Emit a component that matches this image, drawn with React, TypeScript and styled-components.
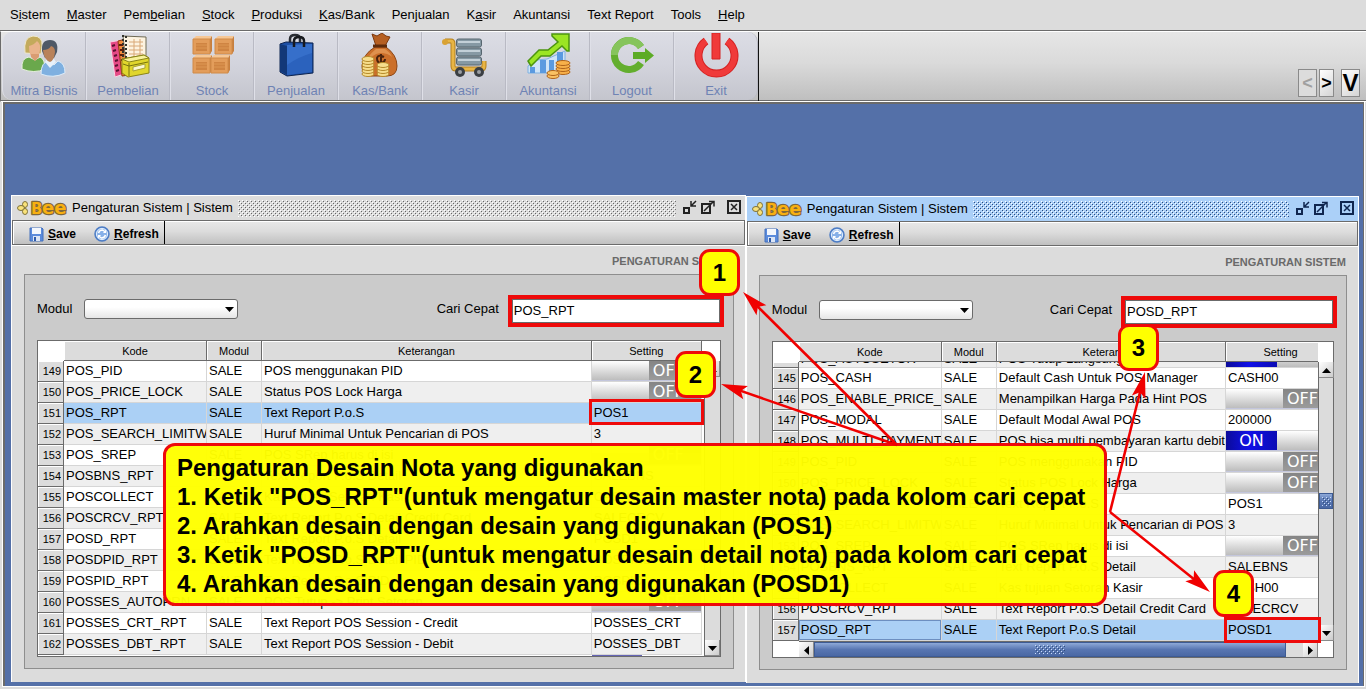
import React from "react";
import styled, { createGlobalStyle, css } from "styled-components";

const GlobalStyle = createGlobalStyle`
  * { box-sizing: border-box; }
  body {
    margin: 0;
    background: #dcdcdc;
    color: #000;
    font: 13px/16px "Liberation Sans", Arial, sans-serif;
  }
  button, input, select { font: inherit; color: inherit; }
  button { border: 0; padding: 0; background: none; }
`;

const LINE = "#6b6b6b";
const RED = "#ee0a0a";
const bar = "linear-gradient(#e8e8e8, #dcdcdc 45%, #c0c0c0)";

/* ---------- page shell ---------- */

const Page = styled.div`
  position: relative;
  overflow: hidden;
`;

const MenuBar = styled.nav`
  display: flex;
  align-items: center;
  gap: 17px;
  height: 31px;
  padding-left: 10px;
  border-bottom: 1px solid ${LINE};
`;

const MenuItem = styled.button`
  white-space: nowrap;
`;

const Ribbon = styled.div`
  display: flex;
  height: 71px;
  border-top: 1px solid #fff;
  border-bottom: 1px solid #fff;
  border-left: 1px solid ${LINE};
  background: linear-gradient(#e6e6e6, #dadada 45%, #bebebe);
  box-shadow: inset 0 -1px ${LINE};
`;

const RibbonGroup = styled.div`
  display: flex;
  padding: 0 0 1px 1px;
  border-right: 1px solid #111;
`;

const RibbonButton = styled.button`
  display: flex;
  flex-direction: column;
  align-items: center;
  gap: 4px;
  width: 84px;
  padding-top: 1px;
  color: #6f83b4;
  white-space: nowrap;
  background: linear-gradient(#dcdde5, #d2d3dc 50%, #c4c5cd);
  border-right: 1px solid #b9bac4;
  border-left: 1px solid #dfe0e8;
  &:first-child { border-radius: 10px 0 0 10px; }
  &:last-child { border-radius: 0 10px 10px 0; }
`;

const Pager = styled.div`
  display: flex;
  align-items: flex-end;
  gap: 2px;
  margin-left: auto;
  padding: 0 6px 4px 0;
`;

const PagerButton = styled.button<{ $w: number; $gap?: number; $size: number }>`
  width: ${(p) => p.$w}px;
  height: 28px;
  margin-left: ${(p) => p.$gap ?? 0}px;
  border: 1px solid #8a8a8a;
  background: linear-gradient(135deg, #fff, #d4d4d4);
  font-weight: bold;
  font-size: ${(p) => p.$size}px;
  &:disabled { color: #a0a0a0; background: #dcdcdc; }
`;

const Desktop = styled.main`
  display: flex;
  align-items: flex-start;
  padding: 91px 4px 3px 6px;
  border: solid ${LINE};
  border-width: 2px 1px 0 2px;
  outline: 1px solid #fff;
  margin: 0 2px 3px 3px;
  background: #5470a8;
`;

/* ---------- internal window ---------- */

const Frame = styled.section<{ $grow: number; $drop: number }>`
  flex: ${(p) => p.$grow} 1 0;
  min-width: 0;
  margin-top: ${(p) => p.$drop}px;
  padding-bottom: 13px;
  border-top: 1px solid #fff;
  border-left: 1px solid #fff;
  border-right: 1px solid #fff;
  background: #dcdcdc;
`;

const TitleBar = styled.header<{ $active: boolean }>`
  display: flex;
  align-items: center;
  gap: 5px;
  height: 24px;
  padding: 0 4px 0 5px;
  white-space: nowrap;
  background: ${(p) => (p.$active ? "#abd0f8" : "#dcdcdc")};
`;

const Title = styled.h1`
  margin: 0;
  font-size: 13px;
  font-weight: normal;
`;

const Bumps = styled.svg`
  flex: 1;
  min-width: 0;
  height: 17px;
`;

const ToolBar = styled.div`
  display: flex;
  height: 25px;
  border: 1px solid ${LINE};
  background: ${bar};
  box-shadow: 0 1px #fff, inset 1px 1px #fff;
`;

const Tools = styled.div`
  display: flex;
  align-items: center;
  gap: 18px;
  padding: 3px 5px 0 16px;
  border-right: 1px solid #000;
`;

const ToolButton = styled.button`
  display: flex;
  align-items: center;
  gap: 4px;
  font-size: 12px;
  font-weight: bold;
`;

const Caption = styled.h2`
  margin: 0;
  padding: 8px 12px 5px;
  text-align: right;
  font-size: 11px;
  line-height: 16px;
  color: #6a6a6a;
`;

const Group = styled.div`
  margin: 0 11px 0 12px;
  padding-bottom: 11px;
  border: 1px solid #8e8e8e;
  background: #cbcbcb;
`;

const FieldRow = styled.div`
  display: flex;
  align-items: center;
  justify-content: space-between;
  padding: 20px 9px 13px 12px;
`;

const Field = styled.div<{ $gap: number }>`
  display: flex;
  align-items: center;
  gap: ${(p) => p.$gap}px;
`;

const FieldLabel = styled.label`
  padding-bottom: 4px;
  white-space: nowrap;
`;

const SelectBox = styled.div`
  position: relative;
  height: 24px;
  svg { position: absolute; right: 4px; top: 6px; pointer-events: none; }
`;

const Select = styled.select`
  appearance: none;
  display: block;
  width: 154px;
  height: 20px;
  border: 1px solid ${LINE};
  border-radius: 3px;
  background: linear-gradient(#fff 40%, #e6e6e6);
`;

const Marked = styled.div`
  width: 216px;
  border: 4px solid ${RED};
`;

const TextInput = styled.input`
  display: block;
  width: 100%;
  height: 24px;
  padding: 0 1px 2px;
  border: 1px solid ${LINE};
  border-radius: 0;
  background: #fff;
`;

/* ---------- data grid ---------- */

const GridBox = styled.div<{ $bar: number }>`
  display: grid;
  grid-template-columns: minmax(0, 1fr) ${(p) => p.$bar}px;
  margin: 0 12px;
  height: 317px;
  border: 1px solid ${LINE};
  background: #fff;
`;

const GridMain = styled.div`
  display: flex;
  flex-direction: column;
  overflow: hidden;
`;

const Table = styled.table<{ $extra: number }>`
  width: calc(100% + ${(p) => p.$extra}px);
  flex: none;
  table-layout: fixed;
  border-collapse: separate;
  border-spacing: 0;
  col:nth-child(1) { width: 26px; }
  col:nth-child(2) { width: 143px; }
  col:nth-child(3) { width: 55px; }
  col:nth-child(5) { width: 110px; }
`;

const HeadCell = styled.th`
  height: 20px;
  padding: 0;
  font-size: 11px;
  line-height: 16px;
  font-weight: normal;
  background: #dcdcdc;
  border-right: 1px solid ${LINE};
  border-bottom: 1px solid ${LINE};
  box-shadow: inset 1px 1px #fff;
  &:first-child { background: #fff; border: 0; }
`;

const clip = css<{ $h?: number }>`
  display: flex;
  align-items: ${(p) => (p.$h ? "flex-end" : "center")};
  height: ${(p) => p.$h ?? 20}px;
  overflow: hidden;
  white-space: nowrap;
`;

const RowNumber = styled.th`
  padding: 0 2px 0 0;
  font-size: 11px;
  font-weight: normal;
  background: #dcdcdc;
  border-right: 1px solid ${LINE};
  border-bottom: 1px solid ${LINE};
  box-shadow: inset 1px 1px #fff;
`;

const NumberText = styled.div<{ $h?: number }>`
  ${clip}
  justify-content: flex-end;
`;

const Row = styled.tr<{ $tone: "even" | "odd" | "picked" }>`
  background: ${(p) => ({ even: "#fff", odd: "#efefef", picked: "#abd0f5" })[p.$tone]};
`;

const Cell = styled.td<{ $focus?: boolean }>`
  padding: 0;
  border-right: 1px solid #d6d6d6;
  border-bottom: 1px solid #d6d6d6;
  ${(p) => p.$focus && "box-shadow: inset 0 0 0 1px #6d8fc0;"}
`;

const CellText = styled.div<{ $h?: number }>`
  ${clip}
  padding-left: 2px;
`;

const ToggleBox = styled.button<{ $on: boolean; $h?: number }>`
  display: grid;
  grid-template-columns: ${(p) => (p.$on ? "51px 1fr" : "57px 1fr")};
  align-content: ${(p) => (p.$h ? "end" : "start")};
  width: 100%;
  height: ${(p) => p.$h ?? 20}px;
  overflow: hidden;
  border-bottom: ${(p) => (p.$h ? 0 : 1)}px solid #c3c6dc;
`;

const ToggleFace = styled.span<{ $kind: "on" | "off" | "knob" }>`
  height: 19px;
  padding-left: ${(p) => (p.$kind === "off" ? 4 : 0)}px;
  line-height: 19px;
  text-align: ${(p) => (p.$kind === "off" ? "left" : "center")};
  font-family: "DejaVu Sans", sans-serif;
  font-size: 16px;
  color: #fff;
  background: ${(p) =>
    ({
      on: "linear-gradient(90deg, #0b0b9a, #1010e8 45%, #0b0bb4)",
      off: "linear-gradient(#858585, #9b9b9b)",
      knob: "linear-gradient(#fff, #dadada 55%, #bdbdbd)",
    })[p.$kind]};
`;

const NextRow = styled.div`
  height: 1px;
  background: linear-gradient(90deg, #6464b4, #6464b4) no-repeat right 60px top / 50px 1px;
`;

const VBar = styled.div<{ $gap: number; $corner?: boolean }>`
  display: flex;
  flex-direction: column;
  margin: 20px 0 ${(p) => (p.$corner ? 16 : 0)}px ${(p) => p.$gap}px;
  background: #dcdcdc;
  border-left: 1px solid ${LINE};
`;

const HBar = styled.div`
  display: flex;
  height: 16px;
  margin-left: 26px;
  background: #dcdcdc;
  border-top: 1px solid ${LINE};
`;

const BarButton = styled.button`
  flex: none;
  display: flex;
  align-items: center;
  justify-content: center;
  width: 15px;
  height: 16px;
  background: linear-gradient(135deg, #fff, #c8c8c8);
  box-shadow: inset -1px -1px #8a8a8a;
`;

const Thumb = styled.div<{ $vertical?: boolean }>`
  display: flex;
  align-items: center;
  justify-content: center;
  border: 1px solid #3d5b94;
  background: linear-gradient(#8ea9d8, #5876b2 50%, #4a68a4);
  ${(p) => (p.$vertical ? "height: 16px;" : "flex: 1; margin-right: 17px;")}
`;

const Space = styled.div<{ $grow: number }>`
  flex: ${(p) => p.$grow} 1 0;
`;

/* ---------- tutorial notes laid over the windows ---------- */

const Notes = styled.div`
  position: absolute;
  inset: 0;
  pointer-events: none;
`;

const Arrows = styled.svg`
  position: absolute;
  left: 0;
  top: 0;
`;

const Callout = styled.div`
  position: absolute;
  left: 163px;
  top: 443px;
  width: 944px;
  padding: 7px 0 5px 11px;
  border: 3px solid ${RED};
  border-radius: 12px;
  background: rgba(255, 255, 0, 0.97);
  font-size: 24px;
  line-height: 29px;
  font-weight: bold;
  white-space: nowrap;
  p { margin: 0; }
`;

const Badge = styled.div<{ $x: number; $y: number }>`
  position: absolute;
  left: ${(p) => p.$x}px;
  top: ${(p) => p.$y}px;
  width: 41px;
  height: 47px;
  border: 3px solid ${RED};
  border-radius: 11px;
  background: #ff0;
  text-align: center;
  font-size: 24px;
  line-height: 41px;
  font-weight: bold;
`;

const CellMark = styled.div<{ $x: number; $y: number; $w: number }>`
  position: absolute;
  left: ${(p) => p.$x}px;
  top: ${(p) => p.$y}px;
  width: ${(p) => p.$w}px;
  height: 26px;
  border: 3px solid ${RED};
`;

/* ---------- drawings ---------- */

const Icon = ({ children }: { children: React.ReactNode }) => (
  <svg width="46" height="46" viewBox="0 0 46 46" fill="none">{children}</svg>
);

const People = () => (
  <Icon>
    <path d="M1 36q-1-11 7-12l6 3 5-3q5 2 5 12-11 5-23 0z" fill="#6aa84c" stroke="#e6f0df" />
    <path d="M4 20Q2 4 12 3q10 0 9 10l-1 8z" fill="#c3aa5c" stroke="#efe9cf" />
    <path d="M8 13q5-1 8-5 4 3 3 9-1 8-6 9-5-2-5-13z" fill="#e9b48c" />
    <path d="M10 24l4 4 4-4v-3h-8z" fill="#d99c72" />
    <path d="M20 41q0-12 8-13l5 4 4-4q7 2 7 12-12 6-24 1z" fill="#7fb0e0" stroke="#dcebf8" />
    <path d="M24 29l5 6 6-6-2-3h-7z" fill="#e8f1fa" />
    <path d="M21 18Q20 7 29 7q9 0 7 12l-3 6h-9z" fill="#4f5966" />
    <path d="M22 17q6 0 8-4 4 1 4 6-1 9-5 10-6-2-7-12z" fill="#b9825a" />
  </Icon>
);

const Ledger = () => (
  <Icon>
    <path d="M5 9l12-2 5 33-12 4z" fill="#e64a86" stroke="#f7d3e2" />
    <path d="M7 13l3-1M8 18l3-1M9 23l3-1M10 28l3-1M10 33l3-1M11 38l3-1" stroke="#5a1030" strokeWidth="2" />
    <path d="M13 8l8-2 3 36-7 1z" fill="#f08b3c" stroke="#8d3a10" />
    <path d="M14 12h4M15 17h4M15 22h4M16 27h4" stroke="#5c1c0a" strokeWidth="2" />
    <path d="M18 3l23 1v25l-20 1z" fill="#fdf3e0" stroke="#6f6a55" />
    <path d="M24 9h14M24 13h14M24 17h14M24 21h14M29 6v20M35 6v20" stroke="#d9a877" />
    <path d="M18 2v26M21 3v24" stroke="#33332c" strokeWidth="2" strokeDasharray="2 2" />
    <path d="M17 26l22-4 5 3v15l-21 4-6-4z" fill="#e0d62c" stroke="#8a8418" />
    <path d="M17 26l22-4 5 3-20 4z" fill="#f7f29a" stroke="#8a8418" />
    <path d="M18 31l6 2 19-4M24 30v13" stroke="#77720f" />
    <path d="M28 34l12-3v4l-12 3z" fill="#fbf8d2" stroke="#a9a233" />
  </Icon>
);

const Box = ({ x, y }: { x: number; y: number }) => (
  <g transform={`translate(${x} ${y})`}>
    <path d="M0 3l3-3h16l-2 3z" fill="#f6c795" />
    <path d="M17 3l2-3v15l-2 3z" fill="#c77f3e" />
    <path d="M0 3h17v15H0z" fill="#e39d5b" stroke="#d08a48" />
    <path d="M3 7h11v8H3z" fill="#cf8442" />
    <path d="M3 9h11M3 12h11" stroke="#dd9753" />
  </g>
);

const Boxes = () => (
  <Icon>
    <Box x={4} y={22} />
    <Box x={22} y={22} />
    <Box x={4} y={3} />
    <Box x={26} y={3} />
  </Icon>
);

const Bag = () => (
  <Icon>
    <path d="M17 14V6q0-4 5-4t5 4v8" stroke="#2a2d33" strokeWidth="2.500" />
    <path d="M7 11l6-2 27 1v30l-26 3-7-4z" fill="#1d4fa5" stroke="#0d2450" />
    <path d="M14 12l25-1v28l-25 3z" fill="#2b62bd" />
    <path d="M7 11l7 2v29l-7-4z" fill="#123878" />
    <path d="M14 12l25-1v9q-14 4-25 12z" fill="#3e78d2" opacity=".6" />
    <path d="M21 14V8q0-4 5-4t5 4v6" stroke="#17191d" strokeWidth="2.500" />
  </Icon>
);

const Coins = ({ x, y, n }: { x: number; y: number; n: number }) => (
  <g>
    {Array.from({ length: n }, (_, i) => (
      <ellipse key={i} cx={x} cy={y - i * 3} rx="6" ry="2.500" fill="#f6dd8c" stroke="#b58a2a" />
    ))}
  </g>
);

const Sack = () => (
  <Icon>
    <path d="M15 1l5 2 5-3 4 3 4 1-5 9h-9z" fill="#b65f22" stroke="#7c3a10" />
    <path d="M18 14h11q11 8 11 19 0 10-10 10H14Q5 43 5 33q1-12 13-19z" fill="#cb6f2a" stroke="#8c4515" />
    <path d="M19 16q-9 7-10 15 6-10 14-11 8 0 12 4-2-5-7-8z" fill="#e39a57" opacity=".8" />
    <path d="M16 13h14" stroke="#5e2b0c" strokeWidth="3" />
    <path d="M27 24q-6-3-7 1 0 5 4 5 4-1 4-4M24 21v12" stroke="#4a230c" strokeWidth="2" />
    <Coins x={11} y={41} n={6} />
    <Coins x={26} y={41} n={4} />
  </Icon>
);

const Cart = () => (
  <Icon>
    <path d="M4 8h6q2 0 2 3v22q0 3 3 3h25q3 0 3-3v-5" stroke="#b5811e" strokeWidth="5" />
    <path d="M4 8h6q2 0 2 3v22q0 3 3 3h25q3 0 3-3v-5" stroke="#e8b545" strokeWidth="3" />
    <circle cx="4" cy="9" r="3" fill="#d9a233" />
    {[6, 15, 24].map((y) => (
      <g key={y}>
        <rect x="15.500" y={y} width="25" height="8" rx="2" fill="#8699a4" stroke="#57666f" />
        <path d={`M17 ${y + 3}h22`} stroke="#c3d0d8" strokeWidth="2" />
      </g>
    ))}
    <circle cx="19" cy="39" r="5" fill="#3b3f44" />
    <circle cx="19" cy="39" r="2" fill="#9b9fa3" />
    <circle cx="38" cy="39" r="5" fill="#3b3f44" />
    <circle cx="38" cy="39" r="2" fill="#9b9fa3" />
  </Icon>
);

const Chart = () => (
  <Icon>
    <path d="M3 33l9-6 10-1 9-4 9-4v22H3z" fill="#cfe4f8" stroke="#7fb1e2" />
    <path d="M5 34h5v6H5zM15 27h6v13h-6zM24 27h5v13h-5zM32 19h6v21h-6z" fill="#5b9ae0" />
    <path d="M3 28l11-11h9l10-8-6-6v-2h17v17h-2l-5-5-12 10h-9L6 33z" fill="#9be524" stroke="#4c9410" strokeWidth="1.500" />
    {[39, 36, 33, 30].map((y) => (
      <ellipse key={y} cx="38" cy={y} rx="7" ry="2.500" fill="#f7b04a" stroke="#b0641a" />
    ))}
    {[43, 40].map((y) => (
      <ellipse key={y} cx="28" cy={y} rx="6" ry="2.500" fill="#f9c163" stroke="#b0641a" />
    ))}
  </Icon>
);

const Logout = () => (
  <Icon>
    <path d="M32 14A14.500 14.500 0 1 0 32 30" stroke="#63ae2e" strokeWidth="7" />
    <path d="M5.500 22A14.500 14.500 0 0 1 32 14" stroke="#86c45c" strokeWidth="7" />
    <path d="M24 19h12v-4l9 7.500-9 7.500v-4H24z" fill="#5cab26" />
  </Icon>
);

const Power = () => (
  <Icon>
    <path d="M13 8A18 18 0 1 0 34 8" stroke="#d42222" strokeWidth="8" />
    <path d="M13 8A18 18 0 1 0 34 8" stroke="#f03a3a" strokeWidth="6" />
    <path d="M19 0h8v26h-8z" fill="#f03a3a" stroke="#d42222" />
  </Icon>
);

const BeeLogo = () => (
  <svg width="50" height="16" viewBox="0 0 50 16">
    <g fill="#f9e27a" stroke="#7d7038">
      <ellipse cx="8" cy="4.500" rx="2.500" ry="3" />
      <ellipse cx="4" cy="8" rx="3.500" ry="2.500" />
      <ellipse cx="8" cy="11.500" rx="2.500" ry="3" />
    </g>
    <g fontFamily="DejaVu Sans, sans-serif" fontWeight="bold" fill="#f8b010" stroke="#80683a" strokeWidth="2.500" paintOrder="stroke" strokeLinejoin="round">
      <text x="14" y="14" fontSize="15">B</text>
      <text x="25" y="14" fontSize="18">ee</text>
    </g>
  </svg>
);

const WindowButtons = ({ ink }: { ink: string }) => (
  <svg width="60" height="17" viewBox="0 0 60 17" fill="none" stroke={ink} strokeWidth="2">
    <path d="M3 8h5v5H3z" />
    <path d="M15 1l-5 5M10 1v5h5" strokeWidth="1.500" />
    <path d="M21 4h8v9h-8z" />
    <path d="M23 11l9-9M28 1.500h5v5" strokeWidth="1.500" />
    <path d="M47 1h12v12H47z" />
    <path d="M50 4l6 6M56 4l-6 6" strokeWidth="1.500" />
  </svg>
);

const SaveIcon = () => (
  <svg width="15" height="15" viewBox="0 0 15 15">
    <path d="M1 1h12l1 1v12H1z" fill="#5b8bdc" stroke="#4470bc" />
    <path d="M3 1h9v6H3z" fill="#f3f7fd" />
    <path d="M4 9h7v5H4z" fill="#dbe5f5" />
    <path d="M5 10h2v4H5z" fill="#2f5aa8" />
  </svg>
);

const RefreshIcon = () => (
  <svg width="16" height="16" viewBox="0 0 16 16" fill="none">
    <circle cx="8" cy="8" r="7" fill="#86b0e8" stroke="#4d7cc4" strokeWidth="1.500" />
    <circle cx="8" cy="8" r="5.500" stroke="#e8f2fd" />
    <path d="M4.500 7q1-3 4-3l3 2M11.500 9q-1 3-4 3l-3-2" stroke="#fff" strokeWidth="1.500" />
    <path d="M12 3.500V7H9zM4 12.500V9h3z" fill="#fff" />
  </svg>
);

const Triangle = ({ turn = 0 }: { turn?: number }) => (
  <svg width="9" height="9" viewBox="0 0 9 9">
    <path d="M0 2h9L4.500 7z" transform={`rotate(${turn} 4.500 4.500)`} />
  </svg>
);

const Grip = ({ w, id }: { w: number; id: string }) => (
  <svg width={w} height="9">
    <pattern id={id} width="4" height="4" patternUnits="userSpaceOnUse">
      <path d="M0 0h1v1H0zM2 2h1v1H2z" fill="#c9dcfa" />
      <path d="M1 1h1v1H1zM3 3h1v1H3z" fill="#33507f" />
    </pattern>
    <rect width={w} height="9" fill={`url(#${id})`} />
  </svg>
);

/* ---------- content ---------- */

type Setting = string | boolean;
type Entry = [number | "", string, string, string, Setting];

const menu: [string, string, string][] = [
  ["S", "i", "stem"], ["", "M", "aster"], ["Pem", "b", "elian"], ["", "S", "tock"],
  ["", "P", "roduksi"], ["", "K", "as/Bank"], ["Penjualan", "", ""], ["K", "a", "sir"],
  ["Akuntansi", "", ""], ["Text Report", "", ""], ["Tools", "", ""], ["", "H", "elp"],
];

const ribbon: [string, () => React.JSX.Element][] = [
  ["Mitra Bisnis", People], ["Pembelian", Ledger], ["Stock", Boxes], ["Penjualan", Bag],
  ["Kas/Bank", Sack], ["Kasir", Cart], ["Akuntansi", Chart], ["Logout", Logout], ["Exit", Power],
];

const shared: Entry[] = [
  [149, "POS_PID", "SALE", "POS menggunakan PID", false],
  [150, "POS_PRICE_LOCK", "SALE", "Status POS Lock Harga", false],
  [151, "POS_RPT", "SALE", "Text Report P.o.S", "POS1"],
  [152, "POS_SEARCH_LIMITWORD", "SALE", "Huruf Minimal Untuk Pencarian di POS", "3"],
  [153, "POS_SREP", "SALE", "POS SRep harus di isi", false],
  [154, "POSBNS_RPT", "SALE", "Text Report P.o.S Detail", "SALEBNS"],
  [155, "POSCOLLECT", "SALE", "Kas tujuan Setoran Kasir", "CASH00"],
  [156, "POSCRCV_RPT", "SALE", "Text Report P.o.S Detail Credit Card", "SALECRCV"],
  [157, "POSD_RPT", "SALE", "Text Report P.o.S Detail", "POSD1"],
];

const leftRows: Entry[] = [
  ...shared,
  [158, "POSDPID_RPT", "SALE", "Text Report P.o.S Detail PID", "POSDPID"],
  [159, "POSPID_RPT", "SALE", "Text Report P.o.S PID", "POSPID"],
  [160, "POSSES_AUTOPRN", "SALE", "POS Tutup -> Print Setoran", false],
  [161, "POSSES_CRT_RPT", "SALE", "Text Report POS Session - Credit", "POSSES_CRT"],
  [162, "POSSES_DBT_RPT", "SALE", "Text Report POS Session - Debit", "POSSES_DBT"],
];

const rightRows: Entry[] = [
  ["", "POS_AUTOSETOR", "SALE", "POS Tutup Langsung", true],
  [145, "POS_CASH", "SALE", "Default Cash Untuk POS Manager", "CASH00"],
  [146, "POS_ENABLE_PRICE_HINT", "SALE", "Menampilkan Harga Pada Hint POS", false],
  [147, "POS_MODAL", "SALE", "Default Modal Awal POS", "200000"],
  [148, "POS_MULTI_PAYMENT", "SALE", "POS bisa multi pembayaran kartu debit", true],
  ...shared,
];

const Toggle = ({ on, h }: { on: boolean; h?: number }) => (
  <ToggleBox $on={on} $h={h} aria-pressed={on}>
    <ToggleFace $kind={on ? "on" : "knob"}>{on && !h ? "ON" : ""}</ToggleFace>
    <ToggleFace $kind={on ? "knob" : "off"}>{on ? "" : "OFF"}</ToggleFace>
  </ToggleBox>
);

const DataTable = ({ rows, picked, extra, focus }: { rows: Entry[]; picked: number; extra: number; focus?: boolean }) => (
  <Table $extra={extra}>
    <colgroup><col /><col /><col /><col /><col /></colgroup>
    <thead>
      <tr>
        {["", "Kode", "Modul", "Keterangan", "Setting"].map((h) => <HeadCell key={h}>{h}</HeadCell>)}
      </tr>
    </thead>
    <tbody>
      {rows.map(([no, code, modul, text, setting]) => {
        const h = no === "" ? 5 : undefined;
        const tone = no === picked ? "picked" : Number(no) % 2 ? "even" : "odd";
        return (
          <Row key={code} $tone={tone}>
            <RowNumber><NumberText $h={h}>{no}</NumberText></RowNumber>
            <Cell $focus={focus && no === picked}><CellText $h={h}>{code}</CellText></Cell>
            <Cell><CellText $h={h}>{modul}</CellText></Cell>
            <Cell><CellText $h={h}>{text}</CellText></Cell>
            <Cell>
              {typeof setting === "boolean" ? <Toggle on={setting} h={h} /> : <CellText $h={h}>{setting}</CellText>}
            </Cell>
          </Row>
        );
      })}
    </tbody>
  </Table>
);

const SettingsWindow = ({ id, active, grow, query, children }: {
  id: string; active: boolean; grow: number; query: string; children: React.ReactNode;
}) => (
  <Frame $grow={grow} $drop={active ? 1 : 0}>
    <TitleBar $active={active}>
      <BeeLogo />
      <Title>Pengaturan Sistem | Sistem</Title>
      <Bumps>
        <pattern id={`${id}-bumps`} width="4" height="4" patternUnits="userSpaceOnUse">
          <path d="M0 0h1v1H0zM2 2h1v1H2z" fill="#fff" />
          <path d="M1 1h1v1H1zM3 3h1v1H3z" fill={active ? "#2b4a80" : "#666"} />
        </pattern>
        <rect width="100%" height="17" fill={`url(#${id}-bumps)`} />
      </Bumps>
      <WindowButtons ink={active ? "#10264f" : "#222"} />
    </TitleBar>
    <ToolBar>
      <Tools>
        <ToolButton><SaveIcon /><span><u>S</u>ave</span></ToolButton>
        <ToolButton><RefreshIcon /><span><u>R</u>efresh</span></ToolButton>
      </Tools>
    </ToolBar>
    <Caption>PENGATURAN SISTEM</Caption>
    <Group>
      <FieldRow>
        <Field $gap={12}>
          <FieldLabel htmlFor={`${id}-modul`}>Modul</FieldLabel>
          <SelectBox>
            <Select id={`${id}-modul`}><option></option></Select>
            <Triangle />
          </SelectBox>
        </Field>
        <Field $gap={9}>
          <FieldLabel htmlFor={`${id}-cari`}>Cari Cepat</FieldLabel>
          <Marked><TextInput id={`${id}-cari`} defaultValue={query} /></Marked>
        </Field>
      </FieldRow>
      {children}
    </Group>
  </Frame>
);

const arrows = [
  { from: [897, 445], to: [743, 292] },
  { from: [897, 445], to: [721, 384] },
  { from: [1110, 512], to: [1145, 372] },
  { from: [1110, 512], to: [1210, 592] },
];

export default function App() {
  return (
    <Page>
      <GlobalStyle />
      <MenuBar>
        {menu.map(([a, key, b]) => (
          <MenuItem key={a + key + b}>{a}{key && <u>{key}</u>}{b}</MenuItem>
        ))}
      </MenuBar>
      <Ribbon>
        <RibbonGroup>
          {ribbon.map(([label, Art]) => (
            <RibbonButton key={label}><Art />{label}</RibbonButton>
          ))}
        </RibbonGroup>
        <Pager>
          <PagerButton $w={19} $size={18} disabled>&lt;</PagerButton>
          <PagerButton $w={15} $size={18}>&gt;</PagerButton>
          <PagerButton $w={19} $gap={5} $size={24}>V</PagerButton>
        </Pager>
      </Ribbon>
      <Desktop>
        <SettingsWindow id="master" active={false} grow={735} query="POS_RPT">
          <GridBox $bar={18}>
            <GridMain>
              <DataTable rows={leftRows} picked={151} extra={0} />
              <NextRow />
            </GridMain>
            <VBar $gap={2}>
              <BarButton aria-label="Up"><Triangle turn={180} /></BarButton>
              <Space $grow={1} />
              <BarButton aria-label="Down"><Triangle /></BarButton>
            </VBar>
          </GridBox>
        </SettingsWindow>
        <SettingsWindow id="detail" active grow={613} query="POSD_RPT">
          <GridBox $bar={15}>
            <GridMain>
              <DataTable rows={rightRows} picked={157} extra={18} focus />
              <HBar>
                <BarButton aria-label="Left"><Triangle turn={90} /></BarButton>
                <Thumb><Grip w={30} id="grip-h" /></Thumb>
                <BarButton aria-label="Right"><Triangle turn={270} /></BarButton>
              </HBar>
            </GridMain>
            <VBar $gap={0} $corner>
              <BarButton aria-label="Up"><Triangle turn={180} /></BarButton>
              <Space $grow={116} />
              <Thumb $vertical><Grip w={9} id="grip-v" /></Thumb>
              <Space $grow={117} />
              <BarButton aria-label="Down"><Triangle /></BarButton>
            </VBar>
          </GridBox>
        </SettingsWindow>
      </Desktop>
      <Notes>
        <CellMark $x={589} $y={399} $w={115} />
        <CellMark $x={1224} $y={617} $w={97} />
        <Callout>
          <p>Pengaturan Desain Nota yang digunakan</p>
          <p>1. Ketik "POS_RPT"(untuk mengatur desain master nota) pada kolom cari cepat</p>
          <p>2. Arahkan desain dengan desain yang digunakan (POS1)</p>
          <p>3. Ketik "POSD_RPT"(untuk mengatur desain detail nota) pada kolom cari cepat</p>
          <p>4. Arahkan desain dengan desain yang digunakan (POSD1)</p>
        </Callout>
        <Arrows width="1366" height="689" stroke="#f00000" strokeWidth="2.500">
          {arrows.map(({ from, to }) => {
            const angle = (Math.atan2(to[1] - from[1], to[0] - from[0]) * 180) / Math.PI;
            const length = Math.hypot(to[0] - from[0], to[1] - from[1]);
            return (
              <g key={to.join()} transform={`translate(${from[0]} ${from[1]}) rotate(${angle})`}>
                <path d={`M0 0H${length - 18}`} />
                <path d={`M${length} 0l-26-7 5 7-5 7z`} fill="#f00000" stroke="none" />
              </g>
            );
          })}
        </Arrows>
        <Badge $x={699} $y={249}>1</Badge>
        <Badge $x={675} $y={351}>2</Badge>
        <Badge $x={1118} $y={324}>3</Badge>
        <Badge $x={1213} $y={570}>4</Badge>
      </Notes>
    </Page>
  );
}
